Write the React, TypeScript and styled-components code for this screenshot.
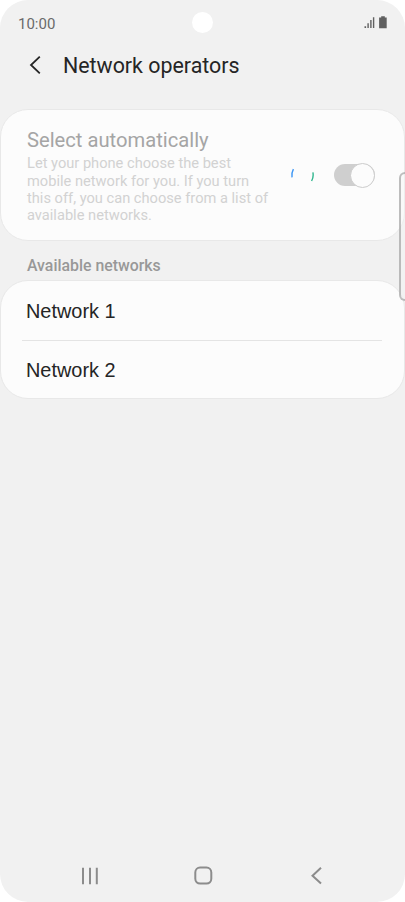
import React from 'react';
import styled, {createGlobalStyle} from 'styled-components';

const networks = ['Network 1', 'Network 2']

const App = () => {
    return (
        <>
            <GlobalStyle/>
            <Phone>
                <StatusBar>
                    <Time>10:00</Time>
                    <Camera/>
                    <StatusIcons viewBox="0 0 24 14">
                        <path d="M0.5 10.2h1.6v1.8H0.5zM3.4 7.2h1.4V12H3.4zM6.2 4h1.4v8H6.2zM8.9 1.2h1.4V12H8.9z"/>
                        <path d="M17.2 0.3h3.6v1.3h1.9v10.6h-7.6V1.6h2.1z"/>
                    </StatusIcons>
                </StatusBar>

                <Header>
                    <BackIcon viewBox="0 0 12 20">
                        <path d="M10.8 1.6L2 10l8.8 8.4"/>
                    </BackIcon>
                    <Title>Network operators</Title>
                </Header>

                <AutoCard>
                    <AutoText>
                        <AutoTitle>Select automatically</AutoTitle>
                        <AutoDescription>
                            <span>Let your phone choose the best</span>
                            <span>mobile network for you. If you turn</span>
                            <span>this off, you can choose from a list of</span>
                            <span>available networks.</span>
                        </AutoDescription>
                    </AutoText>
                    <Spinner viewBox="0 0 24 24">
                        <path d="M3.4 6.2C2 8.8 1.5 11.8 2 14.4" stroke="#3c96f5"/>
                        <path d="M22.9 9.4C23.5 12.4 23.2 15.2 21.6 18" stroke="#2fb68e"/>
                    </Spinner>
                    <Switch>
                        <Knob/>
                    </Switch>
                </AutoCard>

                <SectionTitle>Available networks</SectionTitle>

                <NetworkList>
                    {networks.map((el) => <NetworkItem key={el}>{el}</NetworkItem>)}
                </NetworkList>

                <EdgeHandle/>

                <NavBar>
                    <NavIcon viewBox="0 0 20 20">
                        <path d="M3 1.8v16.4M10 1.8v16.4M16.8 1.8v16.4"/>
                    </NavIcon>
                    <NavIcon viewBox="0 0 20 20">
                        <rect x="1.3" y="1.6" width="16" height="16" rx="4.8"/>
                    </NavIcon>
                    <NavIcon viewBox="0 0 20 20">
                        <path d="M14 1.8L5.5 9.7l8.5 7.9"/>
                    </NavIcon>
                </NavBar>
            </Phone>
        </>
    );
};

export default App;

const GlobalStyle = createGlobalStyle`
  * {
    box-sizing: border-box;
  }

  body {
    margin: 0;
    background-color: #ffffff;
    font-family: Roboto, sans-serif;
  }
`

const Phone = styled.main`
  position: relative;
  display: flex;
  flex-direction: column;
  width: 405px;
  height: 902px;
  border-radius: 28px;
  background-color: #f1f1f1;
  overflow: hidden;
`

//status bar
const StatusBar = styled.div`
  display: grid;
  grid-template-columns: 1fr 21.5px 1fr;
  align-items: center;
  height: 45px;
  padding: 0 17px 0 18px;
`

const Time = styled.span`
  color: #6a6a6a;
  font-size: 15px;
  line-height: 18px;
  margin-top: 2px;
`

const Camera = styled.div`
  width: 21.5px;
  height: 21.5px;
  margin-left: -0.5px;
  border-radius: 50%;
  background-color: #ffffff;
`

const StatusIcons = styled.svg`
  width: 24px;
  height: 14px;
  justify-self: end;
  margin-top: 1px;
  fill: #606060;
`

//header
const Header = styled.header`
  display: flex;
  align-items: center;
  height: 40px;
  padding-left: 29px;
`

const BackIcon = styled.svg`
  width: 12px;
  height: 20px;
  fill: none;
  stroke: #252525;
  stroke-width: 1.8;
`

const Title = styled.h1`
  margin: 2px 0 0 22px;
  color: #252525;
  font-size: 21.4px;
  font-weight: 400;
  line-height: 28px;
`

//cards
const Card = styled.section`
  border: 1px solid #e8e8e8;
  border-radius: 28px;
  background-color: #fcfcfc;
`

const AutoCard = styled(Card)`
  display: flex;
  align-items: center;
  height: 132px;
  margin-top: 24px;
  padding: 0 29px 0 26px;
`

const AutoText = styled.div`
  width: 263px;
  padding-top: 3px;
`

const AutoTitle = styled.h2`
  margin: 0;
  color: #a5a5a5;
  font-size: 20.2px;
  font-weight: 400;
  line-height: 24px;
`

const AutoDescription = styled.p`
  margin: 3px 0 0;
  color: #d2d2d2;
  font-size: 14.65px;
  line-height: 17.3px;

  span {
    display: block;
    white-space: nowrap;
  }
`

const Spinner = styled.svg`
  width: 24px;
  height: 24px;
  flex-shrink: 0;
  fill: none;
  stroke-width: 1.4;
`

const Switch = styled.div`
  display: flex;
  align-items: center;
  justify-content: flex-end;
  width: 41px;
  height: 22px;
  margin-left: auto;
  border-radius: 11px;
  background-color: #cfcfcf;
`

const Knob = styled.div`
  width: 25px;
  height: 25px;
  flex-shrink: 0;
  border: 1px solid #cccccc;
  border-radius: 50%;
  background-color: #fcfcfc;
`

const SectionTitle = styled.h3`
  height: 39px;
  margin: 0;
  padding: 15px 0 0 27px;
  color: #989898;
  font-size: 15.85px;
  font-weight: 500;
  line-height: 19px;
`

const NetworkList = styled(Card)`
  height: 119px;
  padding: 0 22px 0 21px;
`

const NetworkItem = styled.div`
  display: flex;
  align-items: center;
  height: 59px;
  padding: 1px 0 0 4px;
  color: #252525;
  font-family: 'Liberation Sans', Arial, sans-serif;
  font-size: 19.9px;

  & + & {
    border-top: 1px solid #e4e4e4;
  }
`

//edge panel handle, hangs over the right side of the screen
const EdgeHandle = styled.div`
  position: absolute;
  top: 172px;
  right: -8px;
  width: 14px;
  height: 129px;
  border: 2px solid rgba(140, 140, 140, 0.55);
  border-radius: 6px;
  background-color: rgba(245, 245, 245, 0.4);
`

//bottom navigation
const NavBar = styled.nav`
  display: flex;
  justify-content: space-between;
  align-items: center;
  height: 53px;
  margin-top: auto;
  padding: 0 78px 0 80px;
`

const NavIcon = styled.svg`
  width: 20px;
  height: 20px;
  fill: none;
  stroke: #8c8c8c;
  stroke-width: 2;
`
